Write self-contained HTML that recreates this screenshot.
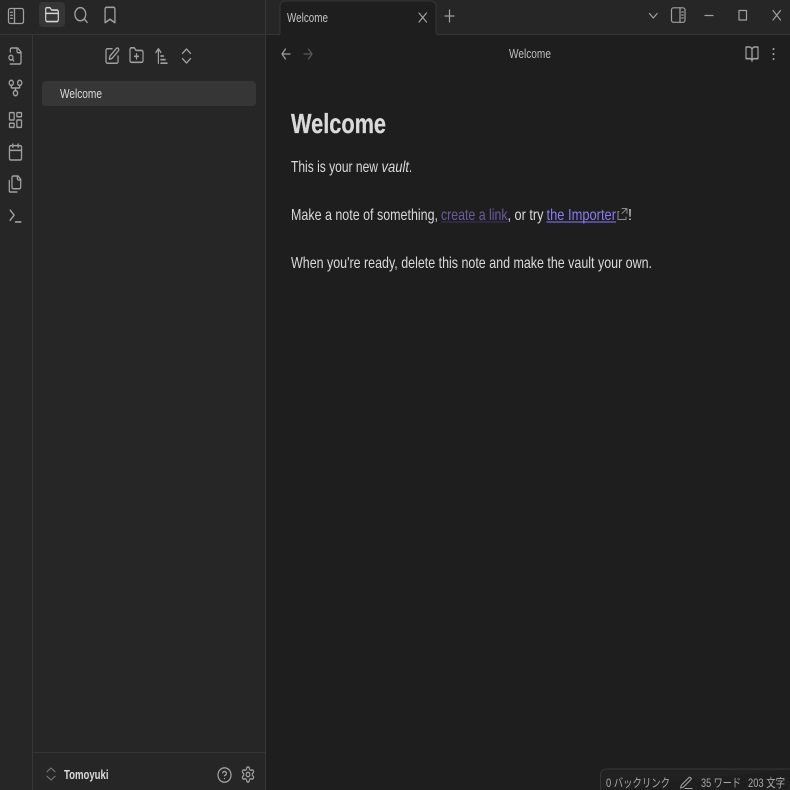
<!DOCTYPE html>
<html lang="en"><head><meta charset="utf-8"><title>Welcome</title>
<style>
html,body{margin:0;padding:0;background:#1e1e1e;width:790px;height:790px;overflow:hidden}
svg{display:block}
text{font-family:"Liberation Sans","Noto Sans CJK JP",sans-serif;fill:#dadada}
.i{fill:none;stroke:#a0a0a0;stroke-linecap:round;stroke-linejoin:round;stroke-width:1.9}
</style></head><body>
<svg width="790" height="790" viewBox="0 0 790 790" xmlns="http://www.w3.org/2000/svg">
<rect width="790" height="790" fill="#1e1e1e"/>
<rect width="790" height="34" fill="#262626"/>
<rect x="0" y="35" width="265" height="755" fill="#262626"/>
<rect x="0" y="34" width="790" height="1" fill="#363636"/>
<rect x="32" y="35" width="1" height="755" fill="#363636"/>
<rect x="265" y="0" width="1" height="790" fill="#363636"/>
<rect x="33" y="752" width="232" height="1" fill="#363636"/>
<path d="M279 35a4 4 0 0 0 1-3V6a5 5 0 0 1 5-5h146a5 5 0 0 1 5 5v26a4 4 0 0 0 1 3z" fill="#1e1e1e" stroke="#363636"/>
<rect x="279.5" y="34" width="157" height="2" fill="#1e1e1e"/>
<rect x="39" y="2" width="26" height="25" rx="4" fill="#363636"/>
<rect x="42" y="81" width="214" height="25" rx="4" fill="#363636"/>

<g class="i">
<g transform="translate(7,7) scale(.75)" style="stroke-width:1.7"><rect x="2" y="2" width="20" height="20" rx="2.5"/><path d="M10 2v20M4.800 7h2.400M4.800 11h2.400M4.800 15h2.400"/></g>
<g style="stroke:#d4d4d4" transform="translate(44.440,5.160) scale(.63,.82)"><path d="M20 20a2 2 0 0 0 2-2V8a2 2 0 0 0-2-2h-7.900a2 2 0 0 1-1.690-.9L9.600 3.900A2 2 0 0 0 7.930 3H4a2 2 0 0 0-2 2v13a2 2 0 0 0 2 2Z"/><path d="M2 10h20"/></g>
<g transform="translate(72.840,5.160) scale(.68,.82)"><circle cx="11" cy="11" r="8"/><path d="m21 21-4.300-4.300"/></g>
<g transform="translate(101.600,4.800) scale(.7,.85)"><path d="m19 21-7-4-7 4V5a2 2 0 0 1 2-2h10a2 2 0 0 1 2 2v16z"/></g>

<g transform="translate(7.630,46.400) scale(.67,.8)"><path d="M4 22h14a2 2 0 0 0 2-2V7l-5-5H6a2 2 0 0 0-2 2v3"/><path d="M14 2v4a2 2 0 0 0 2 2h4"/><circle cx="5" cy="14" r="3"/><path d="m9 18-1.500-1.500"/></g>
<g transform="translate(7.100,77.800) scale(.7,.85)"><circle cx="12" cy="18" r="3"/><circle cx="6" cy="6" r="3"/><circle cx="18" cy="6" r="3"/><path d="M18 9v2c0 .6-.4 1-1 1H7c-.6 0-1-.4-1-1V9"/><path d="M12 12v3"/></g>
<g transform="translate(7.460,110.160) scale(.67,.82)"><rect x="3" y="3" width="7" height="9" rx="1"/><rect x="14" y="3" width="7" height="5" rx="1"/><rect x="14" y="12" width="7" height="9" rx="1"/><rect x="3" y="16" width="7" height="5" rx="1"/></g>
<g transform="translate(7.460,142.400) scale(.67,.8)"><rect x="3" y="4" width="18" height="18" rx="2"/><path d="M16 2v4M8 2v4M3 10h18"/></g>
<g transform="translate(7.300,174.400) scale(.67,.8)"><path d="M20 7h-3a2 2 0 0 1-2-2V2"/><path d="M9 18a2 2 0 0 1-2-2V4a2 2 0 0 1 2-2h7l4 4v10a2 2 0 0 1-2 2Z"/><path d="M3 7.600v12.800A1.600 1.600 0 0 0 4.600 22h9.800"/></g>
<g transform="translate(7.460,205.800) scale(.67,.85)"><path d="M4 17l6-6-6-6"/><path d="M12 19h8"/></g>

<g transform="translate(104,46.400) scale(.67,.8)"><path d="M12 3H5a2 2 0 0 0-2 2v14a2 2 0 0 0 2 2h14a2 2 0 0 0 2-2v-7"/><path d="M18.375 2.625a1 1 0 0 1 3 3l-9.013 9.014a2 2 0 0 1-.853.505l-2.873.84a.5.5 0 0 1-.62-.62l.84-2.873a2 2 0 0 1 .506-.852z"/></g>
<g transform="translate(128.700,45.300) scale(.65,.85)"><path d="M12 10v6M9 13h6"/><path d="M20 20a2 2 0 0 0 2-2V8a2 2 0 0 0-2-2h-7.900a2 2 0 0 1-1.690-.9L9.600 3.900A2 2 0 0 0 7.930 3H4a2 2 0 0 0-2 2v13a2 2 0 0 0 2 2Z"/></g>
<g transform="translate(154.060,45.200) scale(.62,.9)"><path d="M3 8l4-4 4 4M7 4v16M11 12h4M11 16h7M11 20h10"/></g>
<g transform="translate(176.900,45.560) scale(.8,.87)" style="stroke-width:1.600"><path d="m7 15 5 5 5-5M7 9l5-5 5 5"/></g>

<g transform="translate(41.400,765) scale(.8,.75)" style="stroke:#737373;stroke-width:1.600"><path d="m7 15 5 5 5-5M7 9l5-5 5 5"/></g>
<g transform="translate(216.700,766.360) scale(.65,.72)"><circle cx="12" cy="12" r="10"/><path d="M9.090 9a3 3 0 0 1 5.830 1c0 2-3 3-3 3M12 17h.01"/></g>
<g transform="translate(240.560,765.500) scale(.62,.75)"><path d="M12.220 2h-.44a2 2 0 0 0-2 2v.18a2 2 0 0 1-1 1.730l-.43.25a2 2 0 0 1-2 0l-.15-.08a2 2 0 0 0-2.730.73l-.22.38a2 2 0 0 0 .73 2.730l.15.1a2 2 0 0 1 1 1.720v.51a2 2 0 0 1-1 1.740l-.15.09a2 2 0 0 0-.73 2.730l.22.38a2 2 0 0 0 2.730.73l.15-.08a2 2 0 0 1 2 0l.43.25a2 2 0 0 1 1 1.730V20a2 2 0 0 0 2 2h.44a2 2 0 0 0 2-2v-.18a2 2 0 0 1 1-1.730l.43-.25a2 2 0 0 1 2 0l.15.08a2 2 0 0 0 2.730-.73l.22-.39a2 2 0 0 0-.73-2.730l-.15-.08a2 2 0 0 1-1-1.740v-.5a2 2 0 0 1 1-1.740l.15-.09a2 2 0 0 0 .73-2.730l-.22-.38a2 2 0 0 0-2.730-.73l-.15.08a2 2 0 0 1-2 0l-.43-.25a2 2 0 0 1-1-1.730V4a2 2 0 0 0-2-2z"/><circle cx="12" cy="12" r="3"/></g>

<path d="M419 13l7.500 9M426.500 13l-7.500 9" style="stroke-width:1.200"/>
<path d="M449.500 10v12M445 16h9" style="stroke-width:1.200"/>
<path d="M649.500 13.500l3.800 4.500 3.800-4.500" style="stroke-width:1.200"/>
<g style="stroke-width:1.200"><rect x="671.500" y="7.800" width="13.500" height="14.500" rx="2"/><path d="M680 7.800v14.500M681.700 12h1.500M681.700 15h1.500M681.700 18h1.500"/></g>
<path d="M705 15.500h8" style="stroke-width:1.200"/>
<rect x="739" y="10.500" width="7.500" height="9.500" style="stroke-width:1.200"/>
<path d="M773 10.500l7.500 9.500M780.500 10.500l-7.500 9.500" style="stroke-width:1.200"/>

<path d="M282 54h8M282 54l3.500-5M282 54l3.500 5" style="stroke-width:1.200"/>
<path d="M312 54h-8M312 54l-3.500-5M312 54l-3.500 5" style="stroke:#5a5a5a;stroke-width:1.200"/>
<g transform="translate(744.800,44.640) scale(.6,.78)" style="stroke-width:2"><path d="M2 3h6a4 4 0 0 1 4 4v14a3 3 0 0 0-3-3H2z"/><path d="M22 3h-6a4 4 0 0 0-4 4v14a3 3 0 0 1 3-3h7z"/></g>
<path d="M773.500 49v.1M773.500 54v.1M773.500 59v.1" style="stroke-width:2"/>
<path d="M619 211.500h-1v8h8v-2.500M622 208.500h5v5M627 208.500l-5 5" style="stroke:#8a8a8a;stroke-width:1"/>
</g>

<g font-size="13">
<text x="60" y="98" textLength="42" lengthAdjust="spacingAndGlyphs">Welcome</text>
<text x="287" y="22" textLength="41" lengthAdjust="spacingAndGlyphs" style="fill:#c4c4c4">Welcome</text>
<text x="509" y="58" textLength="42" lengthAdjust="spacingAndGlyphs" style="fill:#bdbdbd">Welcome</text>
<text x="64" y="779" textLength="44.500" lengthAdjust="spacingAndGlyphs" font-weight="700" style="fill:#dcdcdc">Tomoyuki</text>
</g>

<text x="291" y="133" font-size="27.500" font-weight="700" textLength="95" lengthAdjust="spacingAndGlyphs" style="stroke:#dadada;stroke-width:.3">Welcome</text>
<g font-size="16">
<text x="291" y="172" textLength="87" lengthAdjust="spacingAndGlyphs">This is your new</text>
<text x="381.500" y="172" textLength="27.500" lengthAdjust="spacingAndGlyphs" font-style="italic">vault</text>
<text x="409" y="172" textLength="3" lengthAdjust="spacingAndGlyphs">.</text>
<text x="291" y="220" textLength="147" lengthAdjust="spacingAndGlyphs">Make a note of something,</text>
<text x="441" y="220" textLength="66.500" lengthAdjust="spacingAndGlyphs" style="fill:#6a5b9f">create a link</text>
<rect x="441" y="221.500" width="66.500" height="1" fill="#3c3558"/>
<text x="507.500" y="220" textLength="36" lengthAdjust="spacingAndGlyphs">, or try</text>
<text x="546.500" y="220" textLength="69.500" lengthAdjust="spacingAndGlyphs" style="fill:#8b7cf6">the Importer</text>
<rect x="546.500" y="221.500" width="69.500" height="1" fill="#8b7cf6"/>
<text x="628" y="220" textLength="4" lengthAdjust="spacingAndGlyphs">!</text>
<text x="291" y="268" textLength="361" lengthAdjust="spacingAndGlyphs">When you're ready, delete this note and make the vault your own.</text>
</g>

<path d="M600.500 790v-15a6 6 0 0 1 6-6H790" fill="#212121" stroke="#363636"/>
<g style="font-size:12px">
<text x="606" y="787" textLength="64" lengthAdjust="spacingAndGlyphs" style="fill:#a8a8a8">0 バックリンク</text>
<text x="701" y="787" textLength="40" lengthAdjust="spacingAndGlyphs" style="fill:#a8a8a8">35 ワード</text>
<text x="748" y="787" textLength="37" lengthAdjust="spacingAndGlyphs" style="fill:#a8a8a8">203 文字</text>
</g>
<g class="i" style="stroke-width:1.100"><path d="M689 777.500a1.500 1.500 0 0 1 2 2l-7.500 7.500-3 1 1-3z"/><path d="M685 788.500h7"/></g>
</svg>
</body></html>
